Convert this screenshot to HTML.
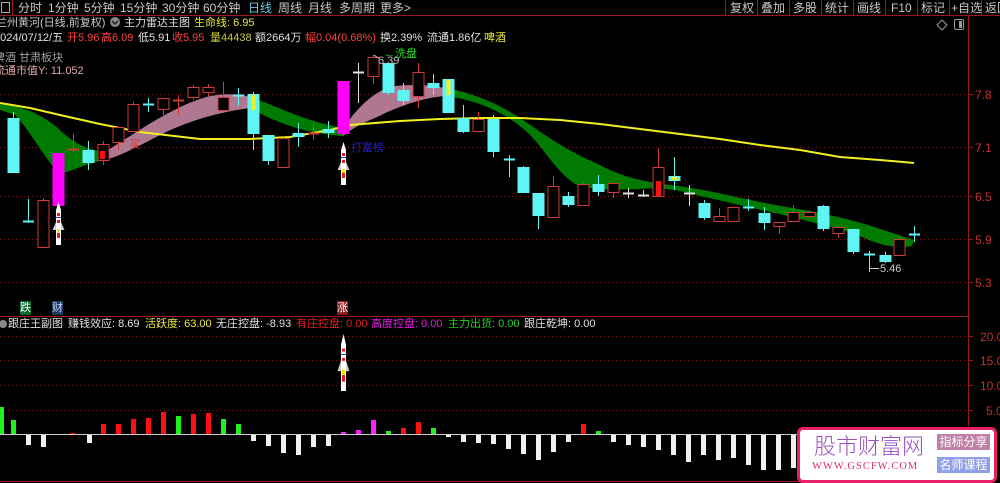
<!DOCTYPE html>
<html><head><meta charset="utf-8"><style>
html,body{margin:0;padding:0;background:#000;width:1000px;height:483px;overflow:hidden;font-family:"Liberation Sans","Noto Sans CJK SC",sans-serif;}
.t{position:absolute;font-size:11px;line-height:14px;white-space:nowrap;}
.tb{font-size:12px;top:1px;color:#c8c8c8}
</style></head><body>
<div style="position:relative;width:1000px;height:483px;">
<svg id="s" width="1000" height="483" style="position:absolute;left:0;top:0">
<rect x="0" y="0" width="1000" height="483" fill="#000"/>
<line x1="0" y1="15.5" x2="1000" y2="15.5" stroke="#9a1a1a"/>
<line x1="968.5" y1="15" x2="968.5" y2="483" stroke="#9a1a1a"/>
<line x1="0" y1="316.5" x2="968" y2="316.5" stroke="#9a1a1a"/>
<line x1="0" y1="481.5" x2="968" y2="481.5" stroke="#9a1a1a"/>
<g stroke="#9a1a1a">
<line x1="725.5" y1="0" x2="725.5" y2="15"/><line x1="757.5" y1="0" x2="757.5" y2="15"/><line x1="789.5" y1="0" x2="789.5" y2="15"/><line x1="821.5" y1="0" x2="821.5" y2="15"/><line x1="853.5" y1="0" x2="853.5" y2="15"/><line x1="885.5" y1="0" x2="885.5" y2="15"/><line x1="917.5" y1="0" x2="917.5" y2="15"/><line x1="949.5" y1="0" x2="949.5" y2="15"/><line x1="981.5" y1="0" x2="981.5" y2="15"/><line x1="12.5" y1="0" x2="12.5" y2="15"/>
</g>
<rect x="1.5" y="2.5" width="8" height="10" fill="none" stroke="#aaa"/>
<g stroke="#8a1a1a" stroke-dasharray="1,3">
<line x1="0" y1="94.5" x2="968" y2="94.5"/><line x1="0" y1="147.5" x2="968" y2="147.5"/><line x1="0" y1="196.5" x2="968" y2="196.5"/><line x1="0" y1="239.5" x2="968" y2="239.5"/><line x1="0" y1="282.5" x2="968" y2="282.5"/>
<line x1="0" y1="336.5" x2="968" y2="336.5"/><line x1="0" y1="360.5" x2="968" y2="360.5"/><line x1="0" y1="385.5" x2="968" y2="385.5"/><line x1="0" y1="410.5" x2="968" y2="410.5"/>
</g>
<g stroke="#9a1a1a"><line x1="968" y1="94.5" x2="973" y2="94.5"/><line x1="968" y1="147.5" x2="973" y2="147.5"/><line x1="968" y1="196.5" x2="973" y2="196.5"/><line x1="968" y1="239.5" x2="973" y2="239.5"/><line x1="968" y1="282.5" x2="973" y2="282.5"/><line x1="968" y1="336.5" x2="973" y2="336.5"/><line x1="968" y1="360.5" x2="973" y2="360.5"/><line x1="968" y1="385.5" x2="973" y2="385.5"/><line x1="968" y1="410.5" x2="973" y2="410.5"/></g>
<path d="M0,104 C20,106 40,112 60,130 C75,145 90,150 105,152 L105,160 C90,162 75,170 60,174 C45,160 30,130 15,115 L0,110 Z" fill="#007a00"/>
<path d="M105,152 C140,130 175,105 210,96 C230,93 240,94 250,97 L250,108 C220,112 190,120 160,135 C135,148 120,156 105,160 Z" fill="#b07890"/>
<path d="M250,97 C275,105 300,120 343,128 L343,136 C310,134 280,125 250,108 Z" fill="#007a00"/>
<path d="M343,128 C360,105 375,90 395,86 C415,84 430,85 445,88 L445,96 C420,98 395,108 375,118 C360,124 350,130 343,136 Z" fill="#b07890"/>
<path d="M445,88 C475,93 500,105 520,118 C545,135 565,150 600,165 C620,176 640,181 670,185 C700,188 730,196 760,202 C790,208 820,212 850,220 C880,228 900,236 914,240 L912,246 C900,249 880,246 860,236 C840,228 810,222 780,214 C750,208 720,200 700,196 C680,190 660,187 640,189 C610,190 590,190 575,184 C555,170 545,150 530,135 C510,115 480,100 445,96 Z" fill="#007a00"/>
<polyline points="0,103 30,108 60,115 100,124 140,132 200,139 250,139 290,137 330,130 350,125 400,121 440,119 480,118 520,118 560,120 600,124 640,129 680,134 720,139 760,145 800,150 840,157 880,160 914,163" fill="none" stroke="#f0f020" stroke-width="2"/>
<g id="cand"></g>
<g id="bars"></g>
<line x1="0" y1="434.5" x2="968" y2="434.5" stroke="#ccc"/>
<g id="rk"></g>
<polygon points="942,20 947,25 942,30 937,25" fill="none" stroke="#999"/>
<rect x="954.5" y="19.5" width="9" height="10" rx="1.5" fill="none" stroke="#999"/><rect x="959" y="21" width="3" height="7" fill="#999"/>
<circle cx="115" cy="22" r="5" fill="#888"/><path d="M112,21 L115,24 L118,21" stroke="#222" fill="none" stroke-width="1.5"/>
<circle cx="3" cy="324" r="4" fill="#888"/>
<line x1="869" y1="268.5" x2="879" y2="268.5" stroke="#ccc"/>
<line x1="374" y1="55" x2="378" y2="58" stroke="#ccc"/>
</svg>

<div class="t tb" style="left:18px">分时</div>
<div class="t tb" style="left:48px">1分钟</div>
<div class="t tb" style="left:84px">5分钟</div>
<div class="t tb" style="left:120px">15分钟</div>
<div class="t tb" style="left:162px">30分钟</div>
<div class="t tb" style="left:203px">60分钟</div>
<div class="t tb" style="left:248px;color:#6cc6e6">日线</div>
<div class="t tb" style="left:278px">周线</div>
<div class="t tb" style="left:308px">月线</div>
<div class="t tb" style="left:339px">多周期</div>
<div class="t tb" style="left:380px">更多&gt;</div>
<div class="t tb" style="left:730px">复权</div>
<div class="t tb" style="left:761px">叠加</div>
<div class="t tb" style="left:793px">多股</div>
<div class="t tb" style="left:825px">统计</div>
<div class="t tb" style="left:857px">画线</div>
<div class="t tb" style="left:891px">F10</div>
<div class="t tb" style="left:921px">标记</div>
<div class="t tb" style="left:951px">+自选</div>
<div class="t tb" style="left:985px">返回</div>

<div class="t" style="left:-4px;top:16px;color:#c8c8c8">兰州黄河(日线,前复权)</div>
<div class="t" style="left:124px;top:16px;color:#e0e0e0">主力雷达主图</div>
<div class="t" style="left:194px;top:16px;color:#e8e840">生命线: 6.95</div>
<div class="t" style="left:-6px;top:31px;color:#e0e0e0">2024/07/12/五</div>
<div class="t" style="left:67px;top:31px;color:#ff4040">开5.96</div>
<div class="t" style="left:101px;top:31px;color:#ff4040">高6.09</div>
<div class="t" style="left:138px;top:31px;color:#e0e0e0">低5.91</div>
<div class="t" style="left:172px;top:31px;color:#ff4040">收5.95</div>
<div class="t" style="left:210px;top:31px;color:#c8c840">量44438</div>
<div class="t" style="left:255px;top:31px;color:#e0e0e0">额2664万</div>
<div class="t" style="left:305px;top:31px;color:#ff4040">幅0.04(0.68%)</div>
<div class="t" style="left:380px;top:31px;color:#e0e0e0">换2.39%</div>
<div class="t" style="left:427px;top:31px;color:#e0e0e0">流通1.86亿</div>
<div class="t" style="left:484px;top:31px;color:#e8e840">啤酒</div>
<div class="t" style="left:-6px;top:51px;color:#a0a0a0">啤酒 甘肃板块</div>
<div class="t" style="left:-6px;top:64px;color:#e0a8a8">流通市值Y:  11.052</div>
<div class="t" style="left:384px;top:47px;color:#20e020">←洗盘</div>
<div class="t" style="left:378px;top:54px;color:#bbb">6.39</div>
<div class="t" style="left:351px;top:141px;color:#2020c0">打富榜</div>
<div class="t" style="left:130px;top:138px;color:#e03030">买</div>
<div class="t" style="left:880px;top:262px;color:#ccc">5.46</div>
<div class="t" style="left:20px;top:301px;color:#fff;background:#0a6a2a">跌</div>
<div class="t" style="left:52px;top:301px;color:#ccf;background:#1a3a5a">财</div>
<div class="t" style="left:337px;top:301px;color:#fff;background:#8a1a1a">涨</div>

<div class="t" style="left:8px;top:317px;color:#e0e0e0">跟庄王副图</div>
<div class="t" style="left:68px;top:317px;color:#e0e0e0">赚钱效应: 8.69</div>
<div class="t" style="left:145px;top:317px;color:#e8e840">活跃度: 63.00</div>
<div class="t" style="left:216px;top:317px;color:#e0e0e0">无庄控盘: -8.93</div>
<div class="t" style="left:296px;top:317px;color:#e02020">有庄控盘: 0.00</div>
<div class="t" style="left:371px;top:317px;color:#e020e0">高度控盘: 0.00</div>
<div class="t" style="left:448px;top:317px;color:#20d020">主力出货: 0.00</div>
<div class="t" style="left:524px;top:317px;color:#e0e0e0">跟庄乾坤: 0.00</div>

<div class="t" style="left:975px;top:88px;color:#c03030;font-size:12px">7.8</div>
<div class="t" style="left:975px;top:141px;color:#c03030;font-size:12px">7.1</div>
<div class="t" style="left:975px;top:190px;color:#c03030;font-size:12px">6.5</div>
<div class="t" style="left:975px;top:233px;color:#c03030;font-size:12px">5.9</div>
<div class="t" style="left:975px;top:276px;color:#c03030;font-size:12px">5.3</div>
<div class="t" style="left:980px;top:330px;color:#c03030;font-size:12px">20.0</div>
<div class="t" style="left:980px;top:354px;color:#c03030;font-size:12px">15.0</div>
<div class="t" style="left:980px;top:379px;color:#c03030;font-size:12px">10.0</div>
<div class="t" style="left:986px;top:404px;color:#c03030;font-size:12px">5.0</div>

<div style="position:absolute;left:797px;top:427px;width:194px;height:50px;background:#fff;border:3px solid #e8206a;border-radius:6px;">
 <div class="t" style="left:14px;top:2px;font-size:22px;line-height:26px;color:#9a50c0;font-family:'Noto Sans CJK SC',sans-serif;font-weight:300">股市财富网</div>
 <div class="t" style="left:12px;top:30px;font-size:10.5px;line-height:14px;color:#e03060;font-family:'Liberation Serif',serif;letter-spacing:1px">WWW.GSCFW.COM</div>
 <div class="t" style="left:137px;top:4px;width:53px;height:16px;line-height:16px;background:#c080a8;color:#fff;font-size:12px;text-align:center">指标分享</div>
 <div class="t" style="left:137px;top:27px;width:53px;height:16px;line-height:16px;background:#90a0e8;color:#fff;font-size:12px;text-align:center">名师课程</div>
</div>

<script>
var NS="http://www.w3.org/2000/svg";
function el(p,t,a){var e=document.createElementNS(NS,t);for(var k in a)e.setAttribute(k,a[k]);p.appendChild(e);return e;}
var C="#5ff5f5",R="#d03a3a",M="#ff00ff",W="#e0e0e0";
var d=[[13,118,173,112,173,'c'],[28,221,223,199,223,'cc'],[43,200,247,198,247,'r'],[58,153,206,153,206,'m'],[73,149,151,134,152,'rc'],
[88,150,163,141,170,'c'],[103,144,160,141,165,'r'],[118,127,142,127,150,'r'],[133,104,131,102,131,'r'],[148,104,106,98,112,'cc'],
[163,98,109,98,115,'r'],[178,100,102,95,115,'rc'],[193,87,97,85,100,'r'],[208,87,92,84,96,'r'],[223,97,110,82,110,'r'],
[238,95,97,88,106,'cc'],[253,94,134,92,150,'cy'],[268,135,161,135,165,'c'],[283,138,167,137,167,'r'],[298,133,137,123,147,'c'],
[313,133,135,123,140,'rc'],[328,129,133,121,138,'c'],[343,81,134,81,134,'m'],[358,72,74,63,103,'w'],[373,57,76,55,84,'r'],
[388,63,93,63,95,'c'],[403,90,101,83,105,'c'],[418,72,96,63,108,'r'],[433,83,88,74,95,'c'],[448,79,113,79,113,'cy'],
[463,118,132,105,133,'c'],[478,119,131,112,131,'r'],[493,119,152,115,157,'c'],[509,159,161,155,177,'cc'],[523,167,193,166,193,'c'],
[538,193,216,193,229,'c'],[553,186,217,176,217,'r'],[568,196,205,192,207,'c'],[583,184,205,182,206,'r'],[598,184,192,175,196,'c'],
[613,183,192,183,198,'r'],[628,193,195,188,198,'w'],[643,195,197,190,197,'w'],[658,167,196,148,196,'rr'],[674,176,181,157,190,'cy2'],
[689,193,195,185,206,'w'],[704,203,218,200,220,'c'],[719,216,221,208,221,'r'],[733,207,221,207,221,'r'],[748,207,209,199,211,'cc'],
[764,213,223,207,230,'c'],[779,222,226,222,234,'r'],[793,212,221,205,221,'r'],[809,212,216,210,217,'r'],[823,206,229,205,231,'c'],
[838,227,233,227,238,'r'],[853,229,252,229,254,'c'],[869,254,256,251,272,'cc'],[885,255,262,252,263,'c'],[899,239,255,236,255,'r'],[914,234,236,226,242,'cc']];
var g=document.getElementById('cand');
d.forEach(function(c){var x=c[0],t=c[1],b=c[2],wt=c[3],wb=c[4],ty=c[5];
 var col=(ty[0]=='c')?C:(ty[0]=='r')?R:(ty=='m')?M:W;
 el(g,'line',{x1:x+.5,y1:wt,x2:x+.5,y2:wb,stroke:col});
 if(ty=='cc'||ty=='rc'||ty=='w'){el(g,'line',{x1:x-5,y1:t+.5,x2:x+6,y2:t+.5,stroke:col,'stroke-width':2});return;}
 if(ty[0]=='r'){el(g,'rect',{x:x-5,y:t+.5,width:11,height:b-t,fill:'#000',stroke:col});
   if(ty=='rr')el(g,'rect',{x:x-2,y:181,width:5,height:15,fill:'#ff1010'});return;}
 el(g,'rect',{x:x-5.5,y:t,width:12,height:b-t,fill:col});
 if(ty=='cy')el(g,'rect',{x:x-1.5,y:t+1,width:4,height:15,fill:'#f0f020'});
 if(ty=='cy2')el(g,'rect',{x:x-2,y:t+1,width:5,height:3,fill:'#f0f020'});
});
el(g,'rect',{x:100,y:151,width:5,height:8,fill:'#ff1010'});
var bs=[[1,407,'g'],[13,420,'g'],[28,445,'w'],[43,447,'w'],[72,433,'r'],[89,443,'w'],[103,424,'r'],[118,424,'r'],[133,419,'r'],[148,418,'r'],[163,412,'r'],[178,416,'g'],[193,414,'r'],[208,413,'r'],[223,419,'g'],[238,424,'g'],[253,441,'w'],[268,446,'w'],[283,453,'w'],[298,455,'w'],[313,447,'w'],[328,446,'w'],[343,432,'m'],[358,430,'m'],[373,420,'m'],[388,431,'g'],[403,428,'r'],[418,422,'r'],[433,428,'g'],[448,437,'w'],[463,442,'w'],[478,443,'w'],[493,444,'w'],[508,449,'w'],[523,454,'w'],[538,460,'w'],[553,452,'w'],[568,442,'w'],[583,424,'r'],[598,431,'g'],[613,442,'w'],[628,445,'w'],[643,447,'w'],[658,450,'w'],[673,455,'w'],[688,462,'w'],[703,455,'w'],[718,460,'w'],[733,458,'w'],[748,465,'w'],[763,470,'w'],[778,470,'w'],[793,468,'w']];
var gb=document.getElementById('bars');
var cm={g:'#20f020',r:'#ff1010',m:'#ff20ff',w:'#f0f0f0'};
bs.forEach(function(b){var y1=Math.min(b[1],434),y2=Math.max(b[1],435);el(gb,'rect',{x:b[0]-2,y:y1,width:5,height:y2-y1,fill:cm[b[2]]});});
function rocket(cx,y,h){var r=document.getElementById('rk');var s=h/43;
 el(r,'path',{d:'M'+cx+','+y+' L'+(cx+2.5)+','+(y+8*s)+' L'+(cx+2.5)+','+(y+43*s)+' L'+(cx-2.5)+','+(y+43*s)+' L'+(cx-2.5)+','+(y+8*s)+' Z',fill:'#fff'});
 el(r,'path',{d:'M'+(cx-2.5)+','+(y+20*s)+' L'+(cx-6)+','+(y+28*s)+' L'+(cx-2.5)+','+(y+28*s)+' Z M'+(cx+2.5)+','+(y+20*s)+' L'+(cx+6)+','+(y+28*s)+' L'+(cx+2.5)+','+(y+28*s)+' Z',fill:'#ccc'});
 el(r,'rect',{x:cx-1.5,y:y+11*s,width:3,height:3,fill:'#e02020'});
 el(r,'rect',{x:cx-2.5,y:y+15*s,width:5,height:1,fill:'#3030c0'});
 el(r,'rect',{x:cx-1.5,y:y+18*s,width:3,height:3,fill:'#e02020'});
 el(r,'rect',{x:cx-1.5,y:y+27*s,width:3,height:4*s,fill:'#f0e020'});
 el(r,'rect',{x:cx-1.5,y:y+31*s,width:3,height:5*s,fill:'#e02020'});
}
rocket(58.5,202,43);rocket(343.5,142,43);rocket(343.5,334,57);
</script>
</div>
</body></html>
